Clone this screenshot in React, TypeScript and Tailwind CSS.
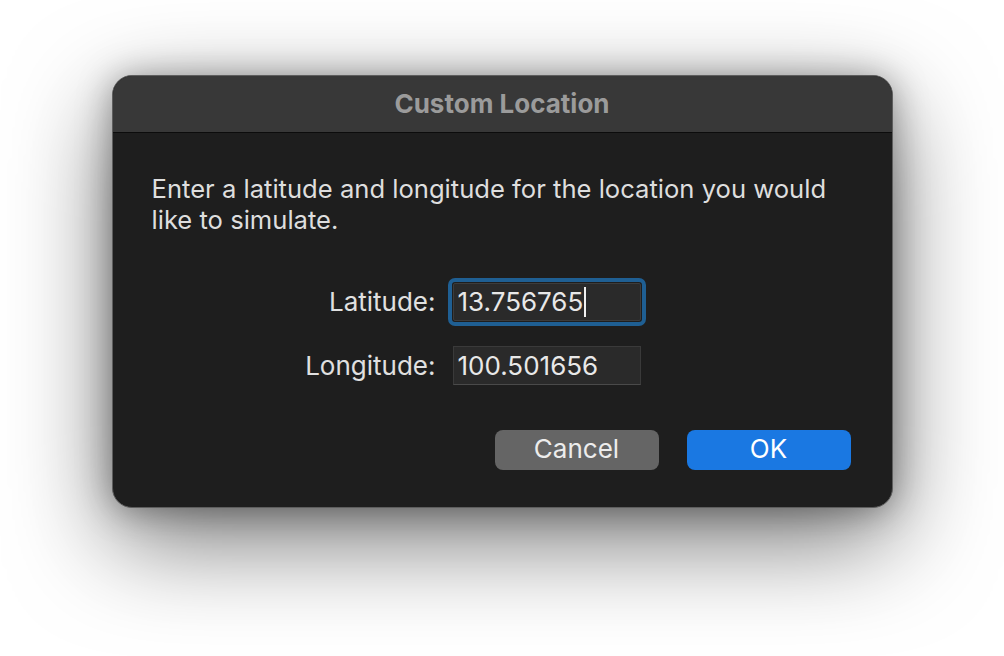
export default function App() {
  return (
    <div
      className="w-full h-[656px] bg-white flex justify-center pt-[75px]"
      style={{ fontFamily: 'Inter, "Noto Sans", sans-serif' }}
    >
      <div className="w-[781px] h-[433px] rounded-[20px] bg-[#1e1e1e] border border-[#5e5e5e] shadow-[0_32px_100px_rgba(0,0,0,0.55),0_2px_34px_rgba(0,0,0,0.35)] flex flex-col overflow-hidden">
        <div className="h-[57px] shrink-0 bg-[#383838] border-b border-[#0c0c0c] flex items-center justify-center">
          <span className="text-[26px] font-bold text-[#9b9b9b] -mt-[2px]">Custom Location</span>
        </div>

        <div className="flex-1 flex flex-col">
          <p className="px-[39px] pt-[40px] text-[25.6px] leading-[31px] text-[#dedede]">
            Enter a latitude and longitude for the location you would
            <br />
            like to simulate.
          </p>

          <div className="mt-[47px] flex flex-col gap-[25px]">
            <div className="flex items-center">
              <span className="w-[323px] text-right text-[26px] text-[#e0e0e0]">Latitude:</span>
              <div className="ml-[17px] w-[188px] h-[38px] bg-[#2a2a2a] border border-[#3c3c3c] rounded-[2px] outline-[4px] outline-[#1f5f93] outline-offset-[1px] flex items-center pl-[4px]">
                <span className="text-[26px] text-[#e8e8e8]">13.756765</span>
                <span className="ml-[1px] w-[1.5px] h-[30px] bg-[#f0f0f0]" />
              </div>
            </div>
            <div className="flex items-center">
              <span className="w-[323px] text-right text-[26px] text-[#e0e0e0]">Longitude:</span>
              <div className="ml-[17px] w-[188px] h-[39px] bg-[#2a2a2a] border border-[#3a3a3a] border-b-[#4a4a4a] flex items-center pl-[4px]">
                <span className="text-[26px] text-[#e8e8e8]">100.501656</span>
              </div>
            </div>
          </div>

          <div className="mt-[45px] flex justify-end gap-[28px] pr-[41px]">
            <button className="w-[164px] h-[40px] rounded-[8px] bg-[#656565] text-[26px] text-[#ececec] leading-none pb-[2px]">
              Cancel
            </button>
            <button className="w-[164px] h-[40px] rounded-[8px] bg-[#1a78e2] text-[26px] text-white leading-none pb-[2px]">
              OK
            </button>
          </div>
        </div>
      </div>
    </div>
  );
}
